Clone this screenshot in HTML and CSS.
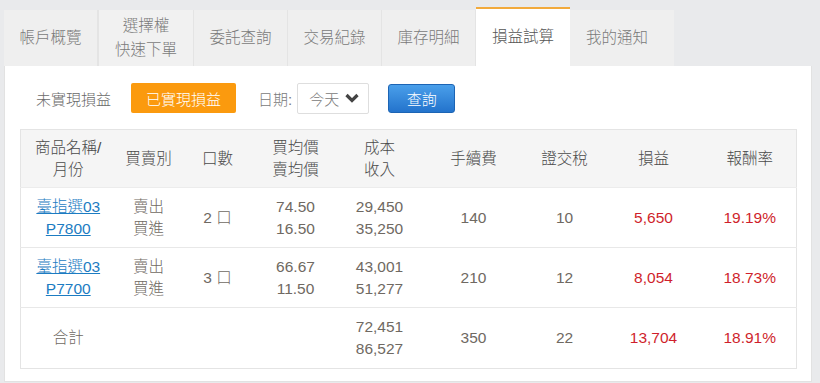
FILE: index.html
```html
<!DOCTYPE html>
<html lang="zh-Hant">
<head>
<meta charset="utf-8">
<title>損益試算</title>
<link rel="stylesheet" href="styles.css">
</head>
<body>
<div class="page">
  <nav class="tabs">
    <div class="tab">帳戶概覽</div>
    <div class="tab tab-two">選擇權<br>快速下單</div>
    <div class="tab">委託查詢</div>
    <div class="tab">交易紀錄</div>
    <div class="tab">庫存明細</div>
    <div class="tab active">損益試算</div>
    <div class="tab tab-last">我的通知</div>
  </nav>
  <section class="panel">
    <div class="filters">
      <button class="seg">未實現損益</button>
      <button class="seg seg-on">已實現損益</button>
      <span class="date-label">日期:</span>
      <div class="select">今天
        <svg class="chev" width="14" height="10" viewBox="0 0 14 10"><path d="M1.5 2 L7 7.5 L12.5 2" fill="none" stroke="#444" stroke-width="3.2"/></svg>
      </div>
      <button class="query">查詢</button>
    </div>
    <table class="grid">
      <colgroup>
        <col style="width:95px"><col style="width:66px"><col style="width:72px"><col style="width:84px"><col style="width:84px"><col style="width:104px"><col style="width:78px"><col style="width:100px"><col>
      </colgroup>
      <thead>
        <tr>
          <th>商品名稱/<br>月份</th>
          <th>買賣別</th>
          <th>口數</th>
          <th>買均價<br>賣均價</th>
          <th>成本<br>收入</th>
          <th>手續費</th>
          <th>證交稅</th>
          <th>損益</th>
          <th>報酬率</th>
        </tr>
      </thead>
      <tbody>
        <tr>
          <td><a class="link" href="#">臺指選03<br>P7800</a></td>
          <td>賣出<br>買進</td>
          <td>2 口</td>
          <td>74.50<br>16.50</td>
          <td>29,450<br>35,250</td>
          <td>140</td>
          <td>10</td>
          <td class="red">5,650</td>
          <td class="red">19.19%</td>
        </tr>
        <tr>
          <td><a class="link" href="#">臺指選03<br>P7700</a></td>
          <td>賣出<br>買進</td>
          <td>3 口</td>
          <td>66.67<br>11.50</td>
          <td>43,001<br>51,277</td>
          <td>210</td>
          <td>12</td>
          <td class="red">8,054</td>
          <td class="red">18.73%</td>
        </tr>
        <tr class="total">
          <td>合計</td>
          <td></td>
          <td></td>
          <td></td>
          <td>72,451<br>86,527</td>
          <td>350</td>
          <td>22</td>
          <td class="red">13,704</td>
          <td class="red">18.91%</td>
        </tr>
      </tbody>
    </table>
  </section>
</div>
</body>
</html>
```

FILE: styles.css
```css
html, body {
  margin: 0;
  padding: 0;
  background: #e9eaec;
  font-family: "Liberation Sans", "Noto Sans CJK TC", sans-serif;
  font-weight: 300;
  color: #6a645e;
}

.page {
  padding: 7px 8px 0 4px;
  display: flex;
  flex-direction: column;
}

.tabs {
  display: flex;
  align-items: flex-end;
  height: 59px;
}

.tab {
  box-sizing: border-box;
  width: 94px;
  height: 56px;
  background: #efefef;
  border-right: 1px solid #e4e4e4;
  color: #7a7a7a;
  font-size: 15.5px;
  line-height: 24px;
  display: flex;
  align-items: center;
  justify-content: center;
  text-align: center;
}

.tab-two {
  width: 96px;
  background: #f1f1f1;
  border-left: 1px solid #e4e4e4;
}

.tab.active {
  height: 59px;
  background: #fff;
  border-top: 2px solid #f2aa3c;
  border-right: none;
  color: #555;
  padding-bottom: 2px;
}

.tab-last {
  width: 104px;
  padding-right: 10px;
  border-right: none;
}

.panel {
  background: #fff;
  border: 1px solid #e2e2e2;
  border-top: none;
  padding: 16px 15px 16px 15px;
  height: 316px;
  box-sizing: border-box;
}

.filters {
  display: flex;
  align-items: center;
  height: 30px;
  margin-top: 1px;
}

.seg {
  font: inherit;
  font-size: 15px;
  border: none;
  background: transparent;
  color: #6a6a6a;
  height: 30px;
  padding: 0 16px;
  border-radius: 2px;
  margin-right: 4px;
}

.seg-on {
  background: #fb9a0e;
  color: #fff;
  padding: 0 15px;
}

.date-label {
  margin-left: 18px;
  font-size: 15px;
  color: #7a7a7a;
}

.select {
  box-sizing: border-box;
  margin-left: 5px;
  width: 72px;
  height: 31px;
  border: 1px solid #dedede;
  border-radius: 2px;
  display: flex;
  align-items: center;
  padding-left: 11px;
  font-size: 15px;
  color: #7a7a7a;
}

.chev {
  margin-left: 6px;
}

.query {
  font: inherit;
  font-size: 15px;
  margin-left: 19px;
  width: 67px;
  height: 29px;
  border: 1px solid #1c64b4;
  border-radius: 3px;
  background: linear-gradient(#4a9fea, #2373cc);
  color: #fff;
}

.grid {
  margin-top: 16px;
  width: 777px;
  table-layout: fixed;
  border-collapse: collapse;
  border: 1px solid #e4e4e4;
  font-size: 15.5px;
}

.grid th {
  background: #f5f5f5;
  color: #4a4a4a;
  font-weight: 300;
  line-height: 22px;
  height: 58px;
  padding: 0;
  box-sizing: border-box;
  text-align: center;
  border-bottom: 1px solid #ececec;
}

.grid td {
  text-align: center;
  line-height: 22px;
  height: 59px;
  padding: 0;
  border-bottom: 1px solid #e8e8e8;
  color: #6f6962;
}

.grid .total td {
  height: 60px;
  border-bottom: none;
}

.link {
  color: #1c7cc2;
  text-decoration: underline;
}

.grid td.red {
  color: #cf1f2c;
}
```
